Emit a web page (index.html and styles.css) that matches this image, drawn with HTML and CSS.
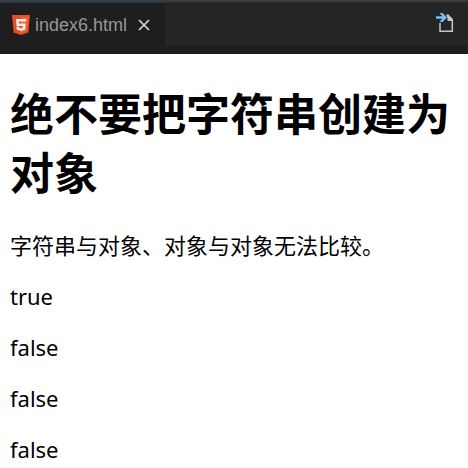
FILE: index.html
```html
<!DOCTYPE html>
<html lang="zh-CN">
<head>
<meta charset="utf-8">
<title>index6.html</title>
<link rel="stylesheet" href="styles.css">
</head>
<body>
<header class="editor">
  <div class="tabs">
    <div class="tab">
      <svg class="logo" viewBox="0 0 18 20" aria-hidden="true">
        <path fill="#e44d26" d="M0 0h18l-1.600 17.500L9 20l-7.400-2.500z"/>
        <path fill="#f16529" d="M9 1.500h7.400l-1.400 14.800L9 18.300z"/>
        <path fill="#f0f0f0" d="M4 4h10.300l-.2 2.500H6.600l.2 2h7l-.6 6L9 16l-4.200-1.400-.3-3H7l.2 1.300 1.800.6 1.800-.6.200-2H4.600z"/>
      </svg>
      <a class="name" href="#content">index6.html</a>
      <button class="icon-button" type="button" aria-label="Close">
        <svg class="close" viewBox="0 0 12 12"><path d="M1 1l10 10M11 1L1 11" fill="none" stroke="#d8d8d8" stroke-width="1.700"/></svg>
      </button>
    </div>
    <button class="icon-button open" type="button" aria-label="Open file">
      <svg class="file" viewBox="0 0 18 20">
        <path d="M4 10v8.300h12.300V7" fill="none" stroke="#c5c5c5" stroke-width="1.500"/>
        <path d="M10 1.500h2.500L17 6v2h-5.500V5z" fill="#c5c5c5"/>
        <path d="M3.500 0h3L11 4.500 6.500 9h-3l2.800-3.200H0V3.200h6.300z" fill="#75beff"/>
      </svg>
    </button>
  </div>
</header>
<main id="content" class="content">
  <h1>绝不要把字符串创建为对象</h1>
  <p>字符串与对象、对象与对象无法比较。</p>
  <p>true</p>
  <p>false</p>
  <p>false</p>
  <p>false</p>
</main>
</body>
</html>
```
FILE: styles.css
```css
body {
  margin: 0;
  background: #fff;
  color: #000;
  font-family: "Noto Sans", "Noto Sans CJK SC", sans-serif;
}

.editor {
  padding-bottom: 8px;
  border-top: 2px solid #3c3c3c;
  background: #1e1e1e;
}

.tabs {
  display: flex;
  justify-content: space-between;
  height: 44px;
  background: #252526;
}

.tab {
  display: flex;
  align-items: center;
  box-sizing: border-box;
  width: 165px;
  padding-left: 12px;
  border-top: 1px solid #153c5c;
  background: #1e1e1e;
}

.logo {
  width: 18px;
  height: 20px;
}

.name {
  margin: 0 11px 0 5px;
  color: #969696;
  font: 18px/24px "Liberation Sans", sans-serif;
  text-decoration: none;
}

.icon-button {
  display: flex;
  align-items: center;
  padding: 0;
  border: 0;
  background: none;
}

.close {
  width: 12px;
  height: 12px;
}

.open {
  margin-right: 14px;
  padding-bottom: 2px;
}

.file {
  width: 18px;
  height: 20px;
}

.content {
  padding: 29px 10px 0;
}

h1 {
  margin: 0 0 29px;
  font-family: "Noto Sans CJK SC", sans-serif;
  font-size: 44px;
  line-height: 59px;
}

p {
  margin: 0 0 21px;
  font-size: 22px;
  line-height: 30px;
}

p:last-child {
  margin-bottom: 0;
}
```
